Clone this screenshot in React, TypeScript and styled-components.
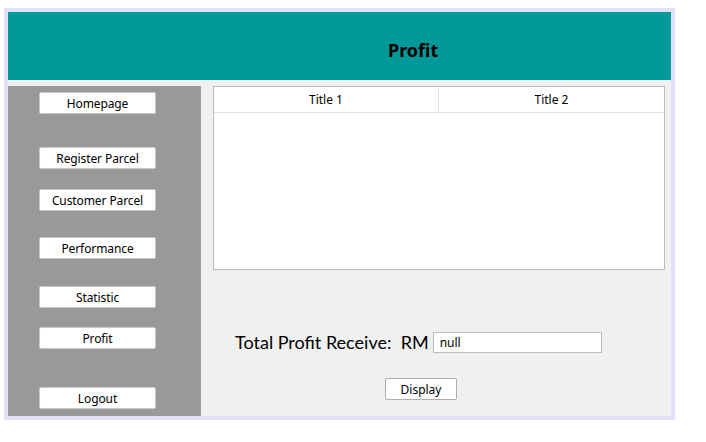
import React from "react"
import styled, { createGlobalStyle } from "styled-components"

const GlobalStyle = createGlobalStyle`
    html, body {
        margin: 0;
        padding: 0;
        background: #ffffff;
        font-family: "Noto Sans", "Open Sans", sans-serif;
    }
`

const Frame = styled.div`
    margin: 8px 0 0 4px;
    width: 663px;
    height: 404px;
    border: 4px solid #e1e1fa;
    background: #f0f0f0;
    display: flex;
    flex-direction: column;
`

const Header = styled.div`
    height: 68px;
    background: #009999;
    display: flex;
    align-items: center;
    padding: 8px 0 0 380px;
    box-sizing: border-box;
`

const Title = styled.h1`
    margin: 0;
    font-size: 18px;
    font-weight: 700;
    color: #000000;
`

const Body = styled.div`
    flex-grow: 1;
    margin-top: 6px;
    display: flex;
`

const Sidebar = styled.div`
    width: 193px;
    background: #999999;
    display: flex;
    flex-direction: column;
    padding: 6px 0 0 31px;
    box-sizing: border-box;
`

const NavButton = styled.button<{ $gap: number }>`
    width: 117px;
    height: 22px;
    margin-top: ${({ $gap }) => $gap}px;
    background: #ffffff;
    border: 1px solid #c8c8c8;
    border-radius: 2px;
    font-family: "Noto Sans", sans-serif;
    font-size: 12px;
    letter-spacing: -0.1px;
    color: #000000;
    padding: 0;
    cursor: pointer;
`

const Content = styled.div`
    flex-grow: 1;
    display: flex;
    flex-direction: column;
    padding: 0 6px 0 12px;
`

const Table = styled.div`
    height: 184px;
    background: #ffffff;
    border: 1px solid #bcbcbc;
    box-sizing: border-box;
`

const TableHead = styled.div`
    display: grid;
    grid-template-columns: 1fr 1fr;
    height: 25px;
    border-bottom: 1px solid #e3e3e3;
`

const HeadCell = styled.div<{ $last?: boolean }>`
    display: flex;
    align-items: center;
    justify-content: center;
    font-size: 12px;
    color: #000000;
    border-right: ${({ $last }) => ($last ? "none" : "1px solid #e3e3e3")};
`

const TotalRow = styled.div`
    display: flex;
    align-items: center;
    margin: 61px 0 0 22px;
`

const TotalLabel = styled.span`
    font-family: Lato, "Noto Sans", sans-serif;
    font-size: 18px;
    color: #000000;
    white-space: pre;
`

const ValueInput = styled.input`
    margin-left: 4px;
    width: 169px;
    height: 21px;
    border: 1px solid #bcbcbc;
    box-sizing: border-box;
    padding: 0 6px;
    font-family: "Noto Sans", sans-serif;
    font-size: 12px;
    color: #000000;
    background: #ffffff;
    outline: none;
`

const DisplayButton = styled.button`
    align-self: flex-start;
    margin: 25px 0 0 172px;
    width: 72px;
    height: 22px;
    background: #ffffff;
    border: 1px solid #adadad;
    border-radius: 2px;
    font-family: "Noto Sans", sans-serif;
    font-size: 12px;
    color: #000000;
    padding: 0;
`

const navItems = [
    { label: "Homepage", gap: 0 },
    { label: "Register Parcel", gap: 33 },
    { label: "Customer Parcel", gap: 20 },
    { label: "Performance", gap: 26 },
    { label: "Statistic", gap: 27 },
    { label: "Profit", gap: 19 },
    { label: "Logout", gap: 38 },
]

const App: React.FC = () => {
    return (
        <>
            <GlobalStyle />
            <Frame>
                <Header>
                    <Title>Profit</Title>
                </Header>
                <Body>
                    <Sidebar>
                        {navItems.map((item) => (
                            <NavButton key={item.label} $gap={item.gap}>
                                {item.label}
                            </NavButton>
                        ))}
                    </Sidebar>
                    <Content>
                        <Table>
                            <TableHead>
                                <HeadCell>Title 1</HeadCell>
                                <HeadCell $last>Title 2</HeadCell>
                            </TableHead>
                        </Table>
                        <TotalRow>
                            <TotalLabel>{"Total Profit Receive:  RM"}</TotalLabel>
                            <ValueInput readOnly value="null" />
                        </TotalRow>
                        <DisplayButton>Display</DisplayButton>
                    </Content>
                </Body>
            </Frame>
        </>
    )
}

export default App
